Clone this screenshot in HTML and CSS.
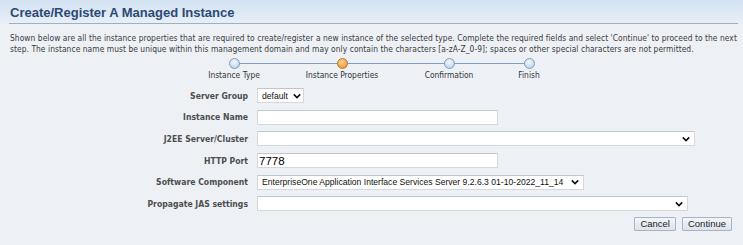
FILE: index.html
```html
<!DOCTYPE html>
<html>
<head>
<meta charset="utf-8">
<link rel="stylesheet" href="styles.css">
</head>
<body>
<div class="page">
  <div class="header">
    <h1 class="title">Create/Register A Managed Instance</h1>
  </div>
  <p class="desc">Shown below are all the instance properties that are required to create/register a new instance of the selected type. Complete the required fields and select 'Continue' to proceed to the next step. The instance name must be unique within this management domain and may only contain the characters [a-zA-Z_0-9]; spaces or other special characters are not permitted.</p>
  <div class="train">
    <div class="stop s1 first"><span class="dot"></span><span class="lbl">Instance Type</span></div>
    <div class="stop s2 current"><span class="dot"></span><span class="lbl">Instance Properties</span></div>
    <div class="stop s3"><span class="dot"></span><span class="lbl">Confirmation</span></div>
    <div class="stop s4 last"><span class="dot"></span><span class="lbl">Finish</span></div>
  </div>
  <div class="form">
    <label class="flabel">Server Group</label>
    <div class="field"><div class="select sel-group"><span class="val">default</span><svg class="chev" viewBox="0 0 10 7"><path d="M1 1.5 L5 5.5 L9 1.5" fill="none" stroke="#111" stroke-width="2"/></svg></div></div>
    <label class="flabel">Instance Name</label>
    <div class="field"><div class="input inp-name"></div></div>
    <label class="flabel">J2EE Server/Cluster</label>
    <div class="field"><div class="select sel-j2ee"><span class="val"></span><svg class="chev" viewBox="0 0 10 7"><path d="M1 1.5 L5 5.5 L9 1.5" fill="none" stroke="#111" stroke-width="2"/></svg></div></div>
    <label class="flabel">HTTP Port</label>
    <div class="field"><div class="input inp-port"><span class="port">7778</span></div></div>
    <label class="flabel">Software Component</label>
    <div class="field"><div class="select sel-sw"><span class="val">EnterpriseOne Application Interface Services Server 9.2.6.3 01-10-2022_11_14</span><svg class="chev" viewBox="0 0 10 7"><path d="M1 1.5 L5 5.5 L9 1.5" fill="none" stroke="#111" stroke-width="2"/></svg></div></div>
    <label class="flabel">Propagate JAS settings</label>
    <div class="field"><div class="select sel-jas"><span class="val"></span><svg class="chev" viewBox="0 0 10 7"><path d="M1 1.5 L5 5.5 L9 1.5" fill="none" stroke="#111" stroke-width="2"/></svg></div></div>
  </div>
  <div class="buttons">
    <button class="btn">Cancel</button>
    <button class="btn">Continue</button>
  </div>
</div>
</body>
</html>
```
FILE: styles.css
```css
html, body {
  margin: 0;
  padding: 0;
}
body {
  background: #edf1f6;
  width: 743px;
  height: 245px;
  overflow: hidden;
  font-family: "DejaVu Sans Condensed", "DejaVu Sans", sans-serif;
}
.page {
  display: flex;
  flex-direction: column;
}
.header {
  height: 24px;
  background: linear-gradient(#d3e2f2, #e8eff7);
  padding: 0 5px 0 9px;
  display: flex;
  align-items: flex-end;
}
.title {
  margin: 0;
  flex: 1;
  font-family: "Liberation Sans", Arial, sans-serif;
  font-size: 13px;
  font-weight: bold;
  color: #2b4a74;
  line-height: 16px;
  padding: 0 0 2px 1px;
  border-bottom: 1px solid #9fb0c3;
}
.desc {
  margin: 9px 0 0 10px;
  width: 731px;
  font-size: 8.4px;
  letter-spacing: 0.05px;
  line-height: 11px;
  color: #3a3a3a;
}
.train {
  display: flex;
  margin: 3px 0 0 180px;
}
.stop {
  position: relative;
  display: flex;
  flex-direction: column;
  align-items: center;
}
.s1 { width: 108px; }
.s2 { width: 108px; }
.s3 { width: 106px; }
.s4 { width: 54px; }
.stop::before, .stop::after {
  content: "";
  position: absolute;
  top: 5px;
  height: 1px;
  background: #7f9fc2;
}
.stop::before { left: 0; right: 50%; }
.stop::after { left: 50%; right: 0; }
.first::before { display: none; }
.last::after { display: none; }
.dot {
  position: relative;
  z-index: 1;
  width: 9px;
  height: 9px;
  border-radius: 50%;
  border: 1px solid #7f9fc2;
  background: radial-gradient(circle at 45% 35%, #f4f8fc, #c3d6ea 75%);
}
.current .dot {
  border-color: #c27a22;
  background: radial-gradient(circle at 45% 35%, #fbd6a0, #ee9a35 75%);
}
.lbl {
  margin-top: 1px;
  font-size: 8.4px;
  line-height: 11px;
  color: #333;
  white-space: nowrap;
}
.form {
  display: grid;
  grid-template-columns: 248px auto;
  column-gap: 9px;
  grid-auto-rows: 21.6px;
  align-items: center;
  margin-top: 4px;
}
.flabel {
  text-align: right;
  font-size: 8.6px;
  font-weight: bold;
  color: #4e4e4e;
  white-space: nowrap;
}
.field {
  display: flex;
}
.select, .input {
  box-sizing: border-box;
  height: 15px;
  background: #fff;
  border: 1px solid #d4d8dc;
  border-top-color: #c2c7cc;
  display: flex;
  align-items: center;
}
.select {
  padding: 0 4px 0 4px;
  justify-content: space-between;
}
.val {
  font-family: "Liberation Sans", Arial, sans-serif;
  font-size: 8.6px;
  color: #111;
  white-space: nowrap;
}
.chev {
  width: 8px;
  height: 6px;
  flex: none;
  margin-left: 5px;
}
.sel-group { width: 47px; }
.inp-name, .inp-port { width: 241px; }
.sel-j2ee { width: 438px; }
.sel-sw { width: 327px; }
.sel-jas { width: 431px; }
.port {
  padding-left: 1px;
  font-family: "Liberation Sans", Arial, sans-serif;
  font-size: 11.5px;
  color: #000;
}
.buttons {
  display: flex;
  justify-content: flex-end;
  gap: 6px;
  margin: 2px 11px 0 0;
}
.btn {
  height: 14px;
  padding: 0 5px;
  font-family: "Liberation Sans", Arial, sans-serif;
  font-size: 9.5px;
  color: #222;
  background: linear-gradient(#f4f6f9, #dce3ec);
  border: 1px solid #a9b4c2;
  border-radius: 1px;
  line-height: 12px;
}
```
